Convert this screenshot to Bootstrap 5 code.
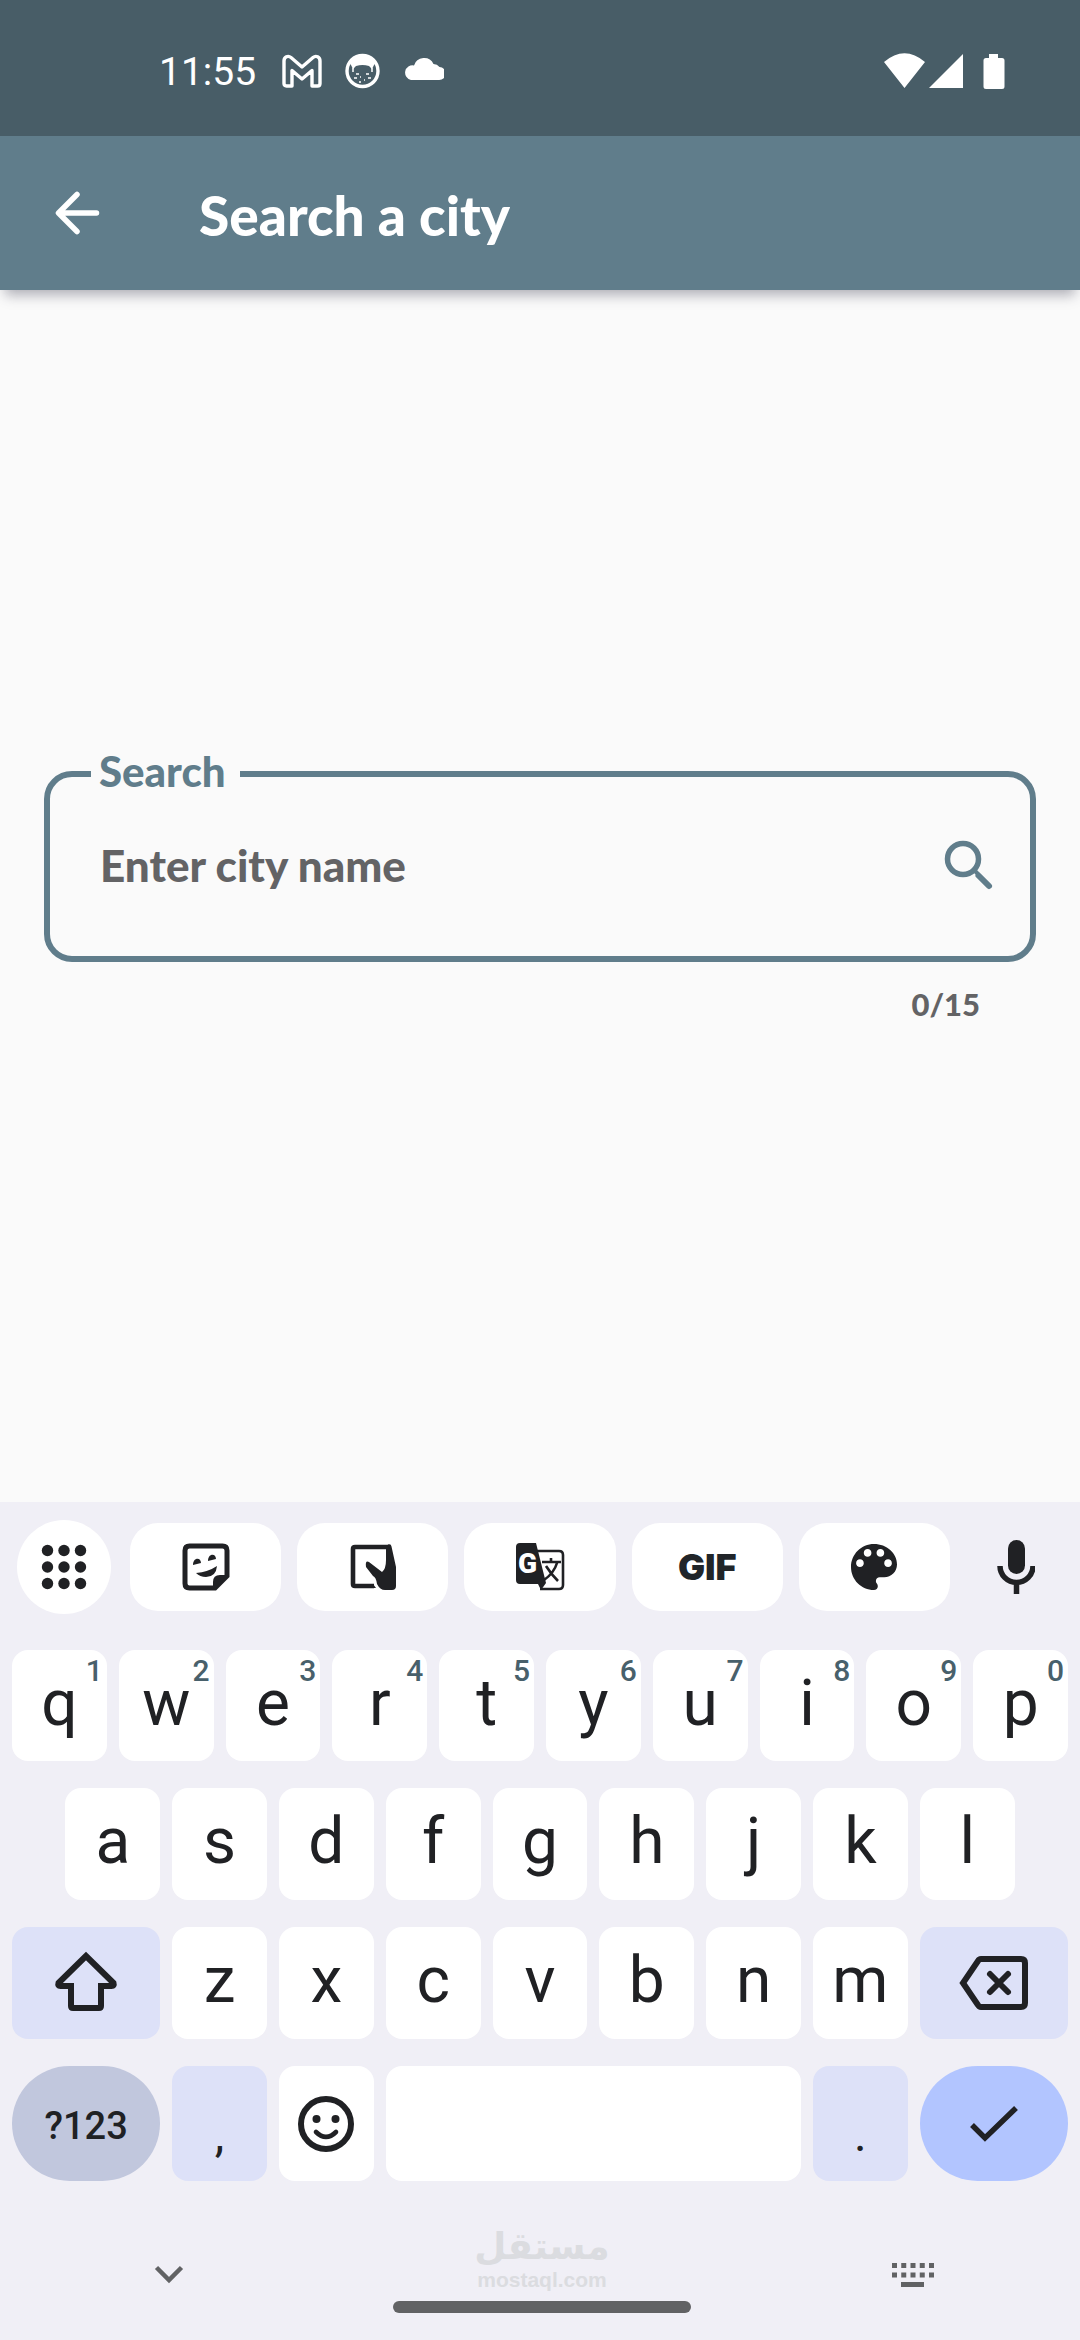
<!DOCTYPE html>
<html lang="en">
<head>
<meta charset="utf-8">
<meta name="viewport" content="width=device-width, initial-scale=1">
<title>Search a city</title>
<link href="https://cdn.jsdelivr.net/npm/bootstrap@5.3.0/dist/css/bootstrap.min.css" rel="stylesheet">
<style>
:root{--slate:#607d8b;--ink:#202124;--board:#f0eff6;--soft:#dde1f8;--grey:#616264}
body{background:#fafafa;font-family:Roboto,"Liberation Sans",sans-serif;color:var(--ink)}
svg{display:block;flex:none}
.status-bar{background:#485d67;height:136px;padding:6px 74px 0 159px}
.clock{font-size:39px;line-height:48px;padding-top:2px;margin-right:26px}
.app-bar{background:var(--slate);height:154px;padding:0 53px;box-shadow:0 10px 12px -5px rgba(60,60,80,.4);z-index:1}
.app-title{font:900 55px/64px Lato,sans-serif;margin:4px 0 0 98px}
.search-area{padding:0 44px 22px;font-family:Lato,sans-serif;font-weight:900}
.search-box{border:6px solid var(--slate);border-radius:28px}
.search-box legend{float:none;width:auto;margin:0 0 0 41px;padding:0 14px 6px 8px;font-size:42px;line-height:48px;color:var(--slate)}
.search-row{height:182px;margin-top:-27px;padding:0 34px 0 50px}
.search-row input{font-size:44px;line-height:56px;font-weight:900;color:var(--ink)}
.search-row input::placeholder{color:#636365;opacity:1}
.counter{font-size:31px;line-height:40px;margin:22px 56px 0 0;color:#636365}
.keyboard{background:var(--board);padding-top:18px}
.tool-row{padding:0 17px;gap:19px;margin-bottom:36px}
.tool-round{width:94px;height:94px}
.tool-pill{height:88px;border-radius:28px}
.gif-label{font:900 36px/44px Inter,sans-serif}
.keys{display:grid;grid-template-columns:repeat(20,minmax(0,1fr));grid-template-rows:111px 112px 112px 115px;gap:27px 12px;padding:0 12px}
.keycap{grid-column:span 2;background:#fff;border:0;border-radius:16px;padding:0 0 4px;font-size:64px;line-height:72px;color:var(--ink);position:relative;display:flex;align-items:center;justify-content:center}
.keycap sup{position:absolute;top:5px;right:4px;font-size:30px;line-height:32px;font-weight:500;color:#48606b}
.inset-key{grid-column:2/span 2}
.key-wide{grid-column:span 3}
.key-space{grid-column:span 8}
.key-soft{background:var(--soft)}
.key-mode{background:#c1c7dd;border-radius:58px;font-size:38px;font-weight:500;padding:4px 0 0}
.key-enter{background:#b2c5ff;border-radius:58px}
.key-mark{font-size:48px;padding:22px 0 0}
.nav-strip{height:159px;padding:45px 145px 0}
.watermark{color:#dbdce0;font:700 21px/24px "Liberation Sans",sans-serif}
.watermark-ar{font:700 37px/42px "DejaVu Sans",sans-serif}
.home-pill{width:298px;height:12px;border-radius:6px;background:var(--grey);margin-top:9px}
</style>
<script src="https://cdn.jsdelivr.net/npm/bootstrap@5.3.0/dist/js/bootstrap.bundle.min.js"></script>
</head>
<body class="d-flex flex-column min-vh-100">

<header class="status-bar d-flex align-items-center text-white">
  <span class="clock">11:55</span>
  <svg width="162" height="36" viewBox="0 0 162 36" fill="none" stroke="#fff">
    <path d="M8 33H4.500q-2.500 0-2.500-2.500V8c0-4 4-6 7-3.500L20 14l11-9.500c3-2.500 7-.5 7 3.500v22.500q0 2.500-2.500 2.500H30V17.500L20 26 10 17.500V33z" stroke-width="3.400" stroke-linejoin="round"/>
    <circle cx="80.500" cy="18" r="15.500" stroke-width="3.400"/>
    <path d="M68 10q3-7 12.500-7T93 10l-3 6-3-3q-6.500-2-13 0l-3 3z" fill="#fff" stroke="none"/>
    <path d="M71 15v4M90 15v4M74 21h3M84 21h3M72 25h3M86 25h3M78 24h1M82 27h1M77 29h2" stroke-width="1.500"/>
    <path d="M129 27h28a6.500 6.500 0 0 0 .5-13 8 8 0 0 0-6-3 10.500 10.500 0 0 0-19.500 1.500A7.300 7.300 0 0 0 129 27z" fill="#fff" stroke="none"/>
  </svg>
  <svg class="ms-auto" width="122" height="36" viewBox="0 0 122 36" fill="#fff">
    <path d="M0 9Q20.500-8.500 41 9L20.500 35zM45 35 79 1v34z"/>
    <path d="M105 1h9v4h4a2.500 2.500 0 0 1 2.500 2.500v26A2.500 2.500 0 0 1 118 36h-16a2.500 2.500 0 0 1-2.500-2.500v-26A2.500 2.500 0 0 1 102 5h3z"/>
  </svg>
</header>

<nav class="app-bar d-flex align-items-center text-white position-relative">
  <button type="button" class="btn p-0 border-0" aria-label="Back">
    <svg width="48" height="48" viewBox="0 0 48 48" fill="none" stroke="#fff" stroke-width="5.500" stroke-linecap="round" stroke-linejoin="round"><path d="M43.500 24H6M24 5.500 5.500 24 24 42.500"/></svg>
  </button>
  <h1 class="app-title">Search a city</h1>
</nav>

<main class="search-area flex-fill d-flex flex-column justify-content-center">
  <fieldset class="search-box">
    <legend><label for="city">Search</label></legend>
    <div class="search-row d-flex align-items-center">
      <input id="city" type="text" maxlength="15" placeholder="Enter city name" class="form-control bg-transparent border-0 shadow-none p-0">
      <button type="button" class="btn p-0 border-0" aria-label="Search">
        <svg width="54" height="54" viewBox="0 0 54 54" fill="none" stroke="#607d8b" stroke-width="5.500"><circle cx="21" cy="21" r="15.500"/><path d="M32 32l4 4" stroke-width="4"/><path d="M36.500 37.500 47 48" stroke-linecap="round" stroke-width="6"/></svg>
      </button>
    </div>
  </fieldset>
  <div class="counter text-end">0/15</div>
</main>

<section class="keyboard" aria-label="Keyboard">
  <div class="tool-row d-flex align-items-center">
    <button type="button" class="btn tool-round rounded-circle bg-white border-0 p-0 d-flex align-items-center justify-content-center flex-shrink-0" aria-label="Menu">
      <svg width="46" height="46" viewBox="0 0 46 46" fill="#202124"><circle cx="6.500" cy="6.500" r="5.700"/><circle cx="23" cy="6.500" r="5.700"/><circle cx="39.500" cy="6.500" r="5.700"/><circle cx="6.500" cy="23" r="5.700"/><circle cx="23" cy="23" r="5.700"/><circle cx="39.500" cy="23" r="5.700"/><circle cx="6.500" cy="39.500" r="5.700"/><circle cx="23" cy="39.500" r="5.700"/><circle cx="39.500" cy="39.500" r="5.700"/></svg>
    </button>
    <div class="d-flex flex-fill gap-3">
      <button type="button" class="btn tool-pill bg-white border-0 p-0 flex-fill w-100 d-flex align-items-center justify-content-center" aria-label="Stickers">
        <svg width="48" height="48" viewBox="0 0 48 48"><path d="M7.500 3h33q4.500 0 4.500 4.500V33L33 45H7.500Q3 45 3 40.500v-33Q3 3 7.500 3z" fill="none" stroke="#202124" stroke-width="5"/><path d="M31 46V39q0-7 7-7h8L34 46zM11 22c0-8 8-8 8-2zM26 18c0-8 8-8 8-2zM14 30q12-1 21-7-1 11-11 11-6 0-10-4z" fill="#202124"/></svg>
      </button>
      <button type="button" class="btn tool-pill bg-white border-0 p-0 flex-fill w-100 d-flex align-items-center justify-content-center" aria-label="Keyboard size">
        <svg width="46" height="48" viewBox="0 0 46 48"><path d="M39 4H5q-2 0-2 2v35q0 2 2 2h19" fill="none" stroke="#202124" stroke-width="4.600"/><path d="M38 1.500q3-1 3.500 2L46 24v19q0 4-4 4h-7q-5 0-8-6-1-7-4-8l-7-9q-1-7 3-5l13 10q4-3 4-12V6zM21 41h2l3 4h-5z" fill="#202124"/></svg>
      </button>
      <button type="button" class="btn tool-pill bg-white border-0 p-0 flex-fill w-100 d-flex align-items-center justify-content-center" aria-label="Translate">
        <svg width="50" height="50" viewBox="0 0 50 50"><path d="M22 9h22q4 0 4 4v30q0 4-4 4H25" fill="#fff" stroke="#202124" stroke-width="2.600"/><path d="M5 1h16l2 8 8 32-5 7-3-6H5q-4 0-4-4V5q0-4 4-4z" fill="#202124"/><text x="3" y="31" font-family="Roboto" font-weight="900" font-size="28" fill="#fff">G</text><path d="M27 20h19M36 16v4M42 21q-3 10-13 17M31 24q5 8 12 15" fill="none" stroke="#202124" stroke-width="2.600"/></svg>
      </button>
      <button type="button" class="btn tool-pill gif-label bg-white border-0 p-0 flex-fill w-100">GIF</button>
      <button type="button" class="btn tool-pill bg-white border-0 p-0 flex-fill w-100 d-flex align-items-center justify-content-center" aria-label="Themes">
        <svg width="46" height="46" viewBox="3 3 18 18"><path fill="#202124" d="M12 3c-4.970 0-9 4.030-9 9s4.030 9 9 9c.83 0 1.500-.67 1.500-1.500 0-.39-.15-.74-.39-1.010-.23-.26-.38-.61-.38-.99 0-.83.67-1.500 1.500-1.500H16c2.760 0 5-2.240 5-5 0-4.420-4.030-8-9-8zm-5.500 9c-.83 0-1.500-.67-1.500-1.500S5.670 9 6.500 9 8 9.670 8 10.500 7.330 12 6.500 12zm3-4C8.670 8 8 7.330 8 6.500S8.670 5 9.500 5s1.500.67 1.500 1.500S10.330 8 9.500 8zm5 0c-.83 0-1.500-.67-1.500-1.500S13.670 5 14.500 5s1.500.67 1.500 1.500S15.330 8 14.500 8zm3 4c-.83 0-1.500-.67-1.500-1.500S16.670 9 17.500 9s1.500.67 1.500 1.500-.67 1.500-1.500 1.500z"/></svg>
      </button>
    </div>
    <button type="button" class="btn tool-round border-0 p-0 d-flex align-items-center justify-content-center flex-shrink-0" aria-label="Voice input">
      <svg width="38" height="54" viewBox="0 0 38 54"><rect x="11" y="0" width="17" height="34" rx="8.500" fill="#202124"/><path d="M3 26a16 16 0 0 0 33 0M19.500 42v12" fill="none" stroke="#202124" stroke-width="5.500"/></svg>
    </button>
  </div>

  <div class="keys">
    <button type="button" class="keycap">q<sup>1</sup></button>
    <button type="button" class="keycap">w<sup>2</sup></button>
    <button type="button" class="keycap">e<sup>3</sup></button>
    <button type="button" class="keycap">r<sup>4</sup></button>
    <button type="button" class="keycap">t<sup>5</sup></button>
    <button type="button" class="keycap">y<sup>6</sup></button>
    <button type="button" class="keycap">u<sup>7</sup></button>
    <button type="button" class="keycap">i<sup>8</sup></button>
    <button type="button" class="keycap">o<sup>9</sup></button>
    <button type="button" class="keycap">p<sup>0</sup></button>

    <button type="button" class="keycap inset-key">a</button>
    <button type="button" class="keycap">s</button>
    <button type="button" class="keycap">d</button>
    <button type="button" class="keycap">f</button>
    <button type="button" class="keycap">g</button>
    <button type="button" class="keycap">h</button>
    <button type="button" class="keycap">j</button>
    <button type="button" class="keycap">k</button>
    <button type="button" class="keycap">l</button>

    <button type="button" class="keycap key-wide key-soft" aria-label="Shift">
      <svg width="64" height="60" viewBox="0 0 64 60" fill="none" stroke="#202124" stroke-width="6"><path d="M32 5 4.500 32q-1 3 2 3H17v20q0 2 2 2h26q2 0 2-2V35h10.500q3 0 2-3z"/></svg>
    </button>
    <button type="button" class="keycap">z</button>
    <button type="button" class="keycap">x</button>
    <button type="button" class="keycap">c</button>
    <button type="button" class="keycap">v</button>
    <button type="button" class="keycap">b</button>
    <button type="button" class="keycap">n</button>
    <button type="button" class="keycap">m</button>
    <button type="button" class="keycap key-wide key-soft pb-0" aria-label="Backspace">
      <svg width="70" height="54" viewBox="0 0 70 54" fill="none" stroke="#202124" stroke-width="6"><path d="M22 3h40q4 0 4 4v40q0 4-4 4H22q-2 0-3-2L4 27 19 5q1-2 3-2z"/><path d="M31 18l18 18M49 18 31 36" stroke-linecap="round"/></svg>
    </button>

    <button type="button" class="keycap key-wide key-mode">?123</button>
    <button type="button" class="keycap key-soft key-mark">,</button>
    <button type="button" class="keycap pb-0" aria-label="Emoji">
      <svg width="56" height="56" viewBox="0 0 56 56" fill="none" stroke="#202124" stroke-width="6"><circle cx="28" cy="28" r="25"/><circle cx="18.500" cy="23" r="4" fill="#202124" stroke="none"/><circle cx="37.500" cy="23" r="4" fill="#202124" stroke="none"/><path d="M18 36q10 10 20 0" stroke-width="4.600" stroke-linecap="round"/></svg>
    </button>
    <button type="button" class="keycap key-space" aria-label="Space"></button>
    <button type="button" class="keycap key-soft key-mark">.</button>
    <button type="button" class="keycap key-wide key-enter pb-0" aria-label="Done">
      <svg width="48" height="38" viewBox="0 0 48 38" fill="none" stroke="#202124" stroke-width="5.500"><path d="M2 20l13 13L46 3"/></svg>
    </button>
  </div>

  <div class="nav-strip d-flex justify-content-between">
    <button type="button" class="btn border-0 p-0 px-2 align-self-start mt-4" aria-label="Hide keyboard">
      <svg width="32" height="44" viewBox="0 0 32 44" fill="none" stroke="#616264" stroke-width="4.500"><path d="M3.500 17.500 16 30l12.500-12.500"/></svg>
    </button>
    <div class="d-flex flex-column align-items-center">
      <span class="watermark watermark-ar" lang="ar" dir="rtl">مستقل</span>
      <span class="watermark">mostaql.com</span>
      <span class="home-pill"></span>
    </div>
    <button type="button" class="btn border-0 p-0 align-self-start mt-4" aria-label="Change keyboard">
      <svg width="44" height="40" viewBox="0 0 44 40" stroke="#616264" stroke-width="5"><path d="M1 15.500h43M1 25h43" stroke-dasharray="5 4.250"/><path d="M10 34.500h23"/></svg>
    </button>
  </div>
</section>
</body>
</html>
